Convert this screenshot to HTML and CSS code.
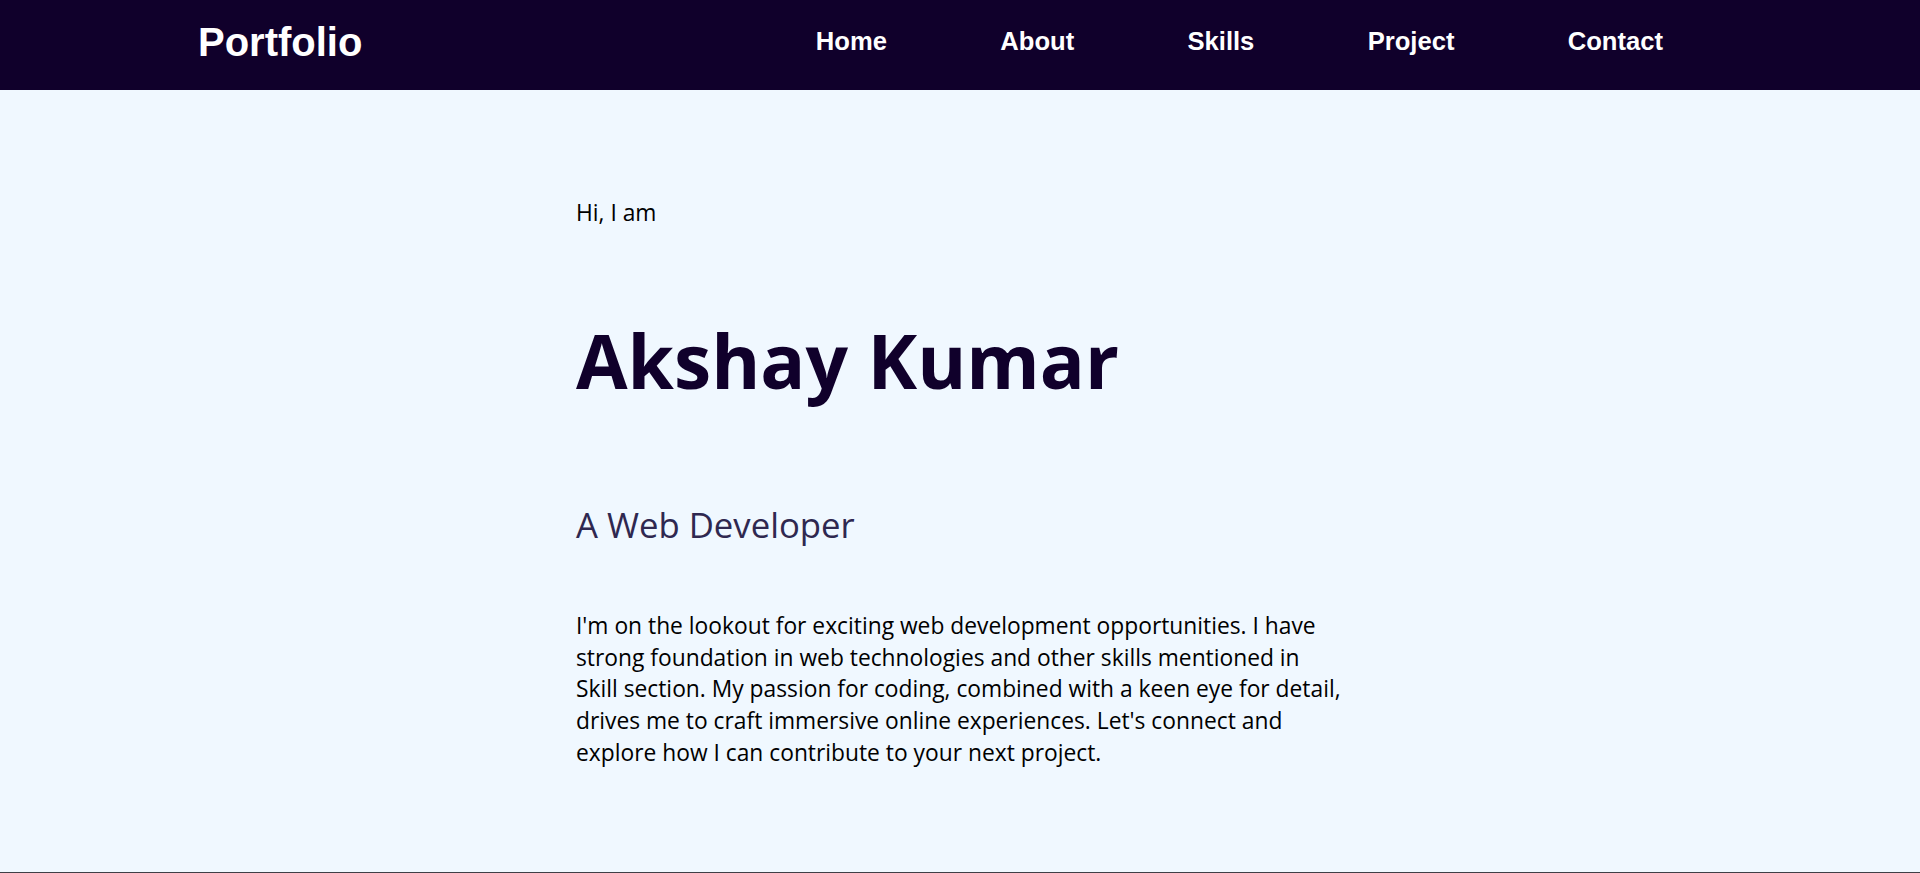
FILE: index.html
```html
<!DOCTYPE html>
<html lang="en">
<head>
<meta charset="UTF-8">
<title>Portfolio</title>
<link rel="stylesheet" href="styles.css">
</head>
<body>
<header class="site-header">
  <div class="logo">Portfolio</div>
  <nav class="nav">
    <a class="nav-link" href="#home">Home</a>
    <a class="nav-link" href="#about">About</a>
    <a class="nav-link" href="#skills">Skills</a>
    <a class="nav-link" href="#project">Project</a>
    <a class="nav-link" href="#contact">Contact</a>
  </nav>
</header>
<main class="hero" id="home">
  <div class="hero-inner">
    <p class="greeting">Hi, I am</p>
    <h1 class="name">Akshay Kumar</h1>
    <h2 class="role">A Web Developer</h2>
    <p class="intro">I'm on the lookout for exciting web development opportunities. I have strong foundation in web technologies and other skills mentioned in Skill section. My passion for coding, combined with a keen eye for detail, drives me to craft immersive online experiences. Let's connect and explore how I can contribute to your next project.</p>
  </div>
</main>
</body>
</html>
```
FILE: styles.css
```css
* {
  box-sizing: border-box;
}

html, body {
  margin: 0;
  padding: 0;
}

body {
  background: #f0f8ff;
  font-family: "Open Sans", "Noto Sans", sans-serif;
  color: #000;
}

.site-header {
  height: 90px;
  background: #10002b;
  display: flex;
  align-items: center;
  justify-content: space-between;
  padding: 0 257px 6px 198px;
}

.logo {
  font-family: "Liberation Sans", Arial, sans-serif;
  font-weight: 700;
  font-size: 40px;
  line-height: 40px;
  color: #fff;
}

.nav {
  display: flex;
  gap: 113.3px;
}

.nav-link {
  font-family: "Liberation Sans", Arial, sans-serif;
  font-weight: 700;
  font-size: 25.6px;
  line-height: 25.6px;
  color: #fff;
  text-decoration: none;
}

.hero {
  height: 783px;
  border-bottom: 1px solid #3f3f46;
  padding-top: 106.5px;
}

.hero-inner {
  width: 768px;
  margin: 0 auto;
}

.greeting {
  margin: 0;
  font-size: 22.8px;
  line-height: 31.8px;
}

.name {
  margin: 94px 0 0;
  font-size: 74.8px;
  line-height: 76.5px;
  font-weight: 700;
  color: #10002b;
}

.role {
  margin: 105.5px 0 0;
  font-size: 34.7px;
  line-height: 42px;
  font-weight: 400;
  color: #2f2850;
}

.intro {
  margin: 63.5px 0 0;
  font-size: 22.8px;
  line-height: 31.8px;
}
```
